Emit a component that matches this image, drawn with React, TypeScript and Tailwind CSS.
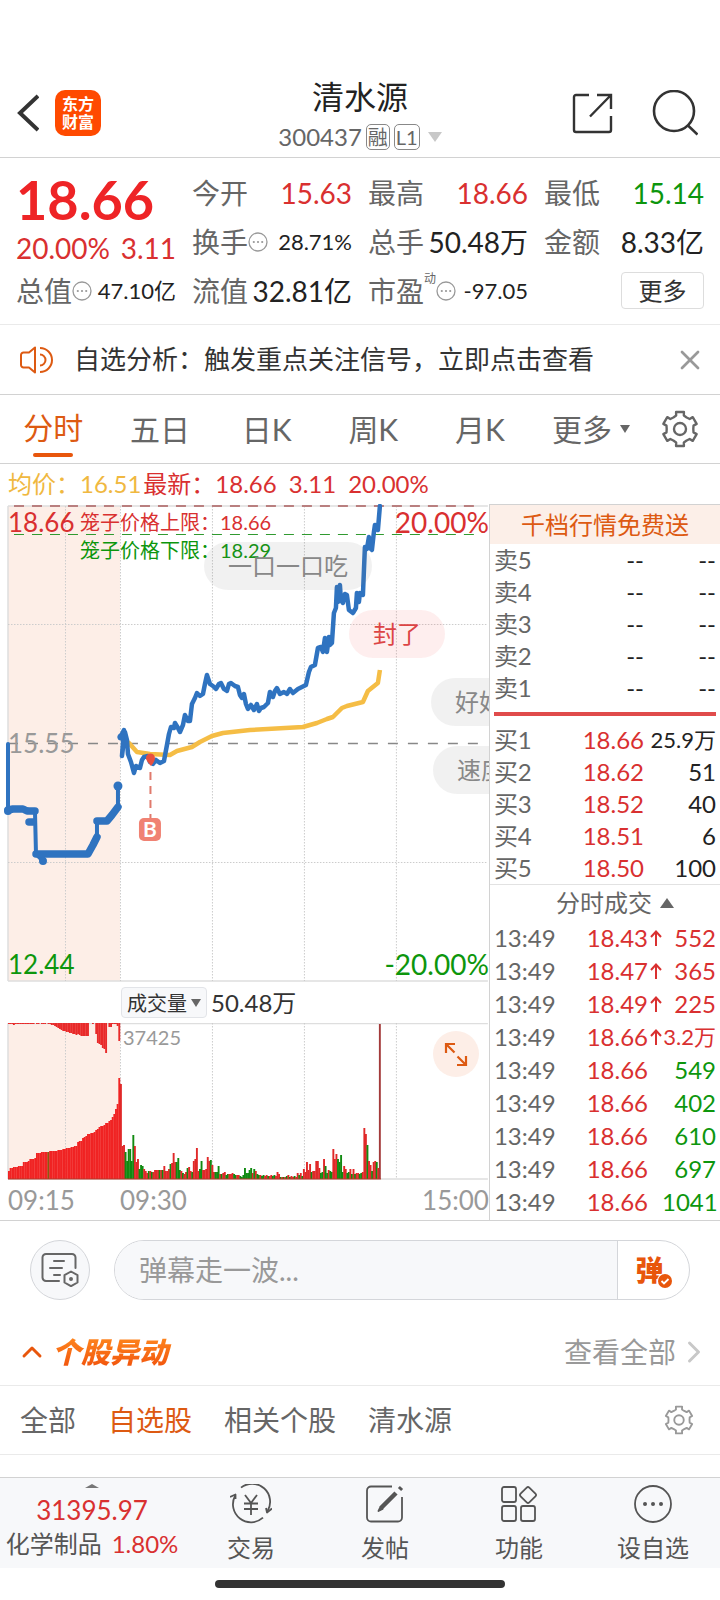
import type { ReactNode } from "react"
import { ChevronRight, ChevronUp, X } from "lucide-react"

const GEAR_POINTS = [0, 60, 120, 180, 240, 300]
  .flatMap((base) =>
    [
      [-30, 8.4],
      [-16, 8.8],
      [-13, 11],
      [13, 11],
      [16, 8.8],
    ].map(([offset, radius]) => {
      const angle = ((base + offset - 90) * Math.PI) / 180
      return `${(12 + radius * Math.cos(angle)).toFixed(2)},${(12 + radius * Math.sin(angle)).toFixed(2)}`
    }),
  )
  .join(" ")

function GearIcon({ className }: { className?: string }) {
  return (
    <svg viewBox="0 0 24 24" className={className} fill="none" stroke="currentColor" strokeWidth="1.5" strokeLinejoin="round" aria-hidden>
      <polygon points={GEAR_POINTS} />
      <circle cx="12" cy="12" r="3.8" />
    </svg>
  )
}

function Caret({ className, up }: { className?: string; up?: boolean }) {
  return (
    <svg viewBox="0 0 12 8" className={className} fill="currentColor" preserveAspectRatio="none" aria-hidden>
      <path d={up ? "M6 0 12 8H0z" : "M0 0h12L6 8z"} />
    </svg>
  )
}

function MoreDots() {
  return (
    <svg viewBox="0 0 20 20" className="size-5 shrink-0 text-[#999]" fill="none" stroke="currentColor" aria-hidden>
      <circle cx="10" cy="10" r="9" strokeWidth="1.3" />
      <path d="M5.8 10h.01M10 10h.01M14.2 10h.01" strokeWidth="2.2" strokeLinecap="round" />
    </svg>
  )
}

function Header() {
  return (
    <header className="grid grid-cols-[1fr_auto_1fr] items-center border-b border-[#d2d2d2] px-4 pt-[73px] pb-1">
      <div className="flex items-center gap-4">
        <button aria-label="返回">
          <svg viewBox="0 0 23 38" className="h-[38px] w-[23px] text-[#333]" fill="none" stroke="currentColor" strokeWidth="4" aria-hidden>
            <path d="M22 2 4 19l18 17" />
          </svg>
        </button>
        <a href="#home" className="flex size-[46px] flex-col items-center justify-center rounded-[10px] bg-[#ff4a00] text-base leading-[18px] font-bold text-white">
          <span>东方</span>
          <span>财富</span>
        </a>
      </div>
      <div className="flex flex-col items-center">
        <h1 className="text-[32px] leading-[48px] text-[#222]">清水源</h1>
        <button className="flex h-8 items-center gap-1 text-2xl text-[#666]">
          300437
          <span className="rounded-[5px] border border-[#888] px-px text-xl leading-6">融</span>
          <span className="rounded-[5px] border border-[#888] px-px text-xl leading-6">L1</span>
          <Caret className="ml-1 h-2.5 w-3.5 text-[#c8c8c8]" />
        </button>
      </div>
      <div className="flex items-center justify-end gap-[38px] pr-1.5 text-[#333]">
        <button aria-label="分享">
          <svg viewBox="0 0 44 44" className="size-11" fill="none" stroke="currentColor" strokeWidth="2.4" aria-hidden>
            <path d="M19 4H6a2 2 0 0 0-2 2v33a2 2 0 0 0 2 2h33a2 2 0 0 0 2-2V25M27 4h14v14M41 4 20 25.500" />
          </svg>
        </button>
        <button aria-label="搜索">
          <svg viewBox="0 0 46 46" className="size-[46px]" fill="none" stroke="currentColor" strokeWidth="2.6" aria-hidden>
            <circle cx="22" cy="21" r="20" />
            <path d="m35.500 35 10 9.500" />
          </svg>
        </button>
      </div>
    </header>
  )
}

type StatProps = { label: ReactNode; value: string; tone?: string; small?: boolean; dots?: boolean }

function Stat({ label, value, tone = "text-[#222]", small, dots }: StatProps) {
  return (
    <div className="flex h-[49px] items-center justify-between whitespace-nowrap">
      <dt className="flex items-center text-[28px] text-[#666]">
        {label}
        {dots && <MoreDots />}
      </dt>
      <dd className={`${small ? "text-[22px]" : "text-[28px]"} ${tone}`}>{value}</dd>
    </div>
  )
}

function Quote() {
  return (
    <dl className="grid grid-cols-4 gap-x-4 border-b border-[#eaeaea] px-4 pt-[10px] pb-[9px]">
      <div className="row-span-2">
        <dt className="sr-only">最新价</dt>
        <dd className="h-[62px] text-[54px] leading-[64px] font-bold text-[#ee2426]">18.66</dd>
        <dd className="flex h-9 items-center justify-between text-[28px] leading-9 text-[#d93030]">
          <span>20.00%</span>
          <span>3.11</span>
        </dd>
      </div>
      <Stat label="今开" value="15.63" tone="text-[#d93030]" />
      <Stat label="最高" value="18.66" tone="text-[#d93030]" />
      <Stat label="最低" value="15.14" tone="text-[#0d960d]" />
      <Stat label="换手" value="28.71%" small dots />
      <Stat label="总手" value="50.48万" />
      <Stat label="金额" value="8.33亿" />
      <Stat label="总值" value="47.10亿" small dots />
      <Stat label="流值" value="32.81亿" />
      <Stat
        label={
          <>
            市盈<sup className="-top-3 text-xs">动</sup>
          </>
        }
        value="-97.05"
        small
        dots
      />
      <div className="flex items-center justify-end">
        <button className="h-[37px] w-[83px] rounded border border-[#ddd] text-2xl leading-none text-[#333]">更多</button>
      </div>
    </dl>
  )
}

function Notice() {
  return (
    <div className="flex h-[70px] items-center border-b border-[#d2d2d2] px-5">
      <svg viewBox="0 0 34 28" className="mr-5 h-7 w-[34px] text-[#dd5a12]" fill="none" stroke="currentColor" strokeWidth="2" strokeLinejoin="round" aria-hidden>
        <path d="M15 1.500v25L9 21.500H3.500a2.500 2.500 0 0 1-2.500-2.500V9a2.500 2.500 0 0 1 2.500-2.500H9z" />
        <path d="M20 8.500a5.500 5.500 0 0 1 0 11M20 2a12 12 0 0 1 0 24" />
      </svg>
      <a href="#signal" className="flex-1 text-[26px] text-[#333]">
        自选分析：触发重点关注信号，立即点击查看
      </a>
      <button aria-label="关闭">
        <X className="-mr-1.5 size-8 text-[#999]" strokeWidth={2} />
      </button>
    </div>
  )
}

function PeriodTabs() {
  return (
    <nav className="grid grid-cols-[repeat(6,minmax(0,1fr))_80px] border-b border-[#d2d2d2] text-3xl text-[#666]">
      <button className="flex h-[68px] flex-col items-center justify-end text-[#dd5a12]">
        <span className="leading-[52px]">分时</span>
        <span className="mb-1.5 h-1 w-10 rounded-full bg-[#e8560c]" />
      </button>
      {["五日", "日K", "周K", "月K"].map((tab) => (
        <button key={tab}>{tab}</button>
      ))}
      <button className="flex items-center justify-end gap-2 pr-2.5">
        更多
        <Caret className="h-2 w-2.5" />
      </button>
      <button aria-label="图表设置" className="flex items-center justify-center">
        <GearIcon className="size-[38px]" />
      </button>
    </nav>
  )
}

const PRICE_LINE =
  "120,233 122,230 124,226 122,252 125,228 127,236 128,250 131,258 134,269 136,262 140,264 142,256 144,253 148,252 150,258 153,260 156,256 160,259 164,257 167,241 169,230 171,223 174,224 175,219 178,224 180,228 183,221 185,211 188,217 190,217 192,200 195,194 197,189 200,192 203,190 205,180 207,171 210,180 213,182 216,185 219,180 221,179 224,185 227,187 229,180 231,179 235,182 238,183 240,191 242,194 244,190 246,200 248,205 251,201 254,206 257,200 259,207 261,204 264,203 268,199 270,188 273,193 275,187 277,184 280,190 284,188 287,190 290,185 293,189 298,185 302,183 306,181 309,168 311,163 315,161 318,144 321,143 323,148 325,134 327,148 329,133 330,141 332,139 334,109 336,104 337,83 338,98 340,81 341,96 343,99 345,90 347,91 349,106 353,109 356,104 357,89 359,98 360,89 363,91 365,43 367,45 369,33 370,44 372,46 374,28 375,21 378,26 380,2"
const AVERAGE_LINE =
  "121,233 129,239 137,248 150,250 170,251 177,247 192,243 200,238 212,232 223,229 250,226 303,223 317,219 327,215 333,213 342,204 347,202 363,198 368,187 378,179 380,166"
const AUCTION_LINE = "8,240 8,307 13,304 23,304 35,308 36,350 43,357 43,350 88,349 93,341 97,333 97,317 107,317 112,311 118,303 118,282"
const GRID_X = [65, 120, 212, 304, 396]

function PriceChart() {
  return (
    <div className="relative h-[478px] overflow-hidden">
      <svg viewBox="0 0 489 478" preserveAspectRatio="none" className="h-full w-full" fill="none" role="img" aria-label="分时走势">
        <rect x="8" y="2" width="112" height="475" fill="#fdeee7" />
        <path d="M8 2h480M8 477h480M8 2v475" stroke="#dedede" strokeWidth="1.500" />
        {GRID_X.map((x) => (
          <path key={x} d={`M${x}.5 2v475`} stroke="#ccc" strokeDasharray="1.500 1.500" />
        ))}
        <path d="M8 120.500h480M8 358.500h480" stroke="#ccc" strokeDasharray="1.500 1.500" />
        <path d="M14 2h466" stroke="#b97f7f" strokeWidth="2" strokeDasharray="10 8" />
        <path d="M14 30.500h466" stroke="#2f9a2f" strokeDasharray="10 8" />
        <path d="M8 239.500h480" stroke="#888" strokeWidth="1.500" strokeDasharray="10 10" />
        <polyline points={AVERAGE_LINE} stroke="#f5bd45" strokeWidth="4.500" strokeLinejoin="round" />
        <g stroke="#2f73c0" strokeLinejoin="round" strokeLinecap="round">
          <polyline points={AUCTION_LINE} strokeWidth="4" />
          <path d="M8 306 13 305H23L27 307H35M29 318H33M36 350H88L93 341L97 333M97 317H107L112 311L118 303" strokeWidth="7.500" />
          <polyline points={PRICE_LINE} strokeWidth="4.500" />
        </g>
        <g fill="#2f73c0">
          <circle cx="8" cy="307" r="4" />
          <circle cx="43" cy="357" r="4" />
          <circle cx="118" cy="282" r="4.500" />
          <circle cx="121" cy="233" r="3.500" />
        </g>
        <path d="M150.500 268v46" stroke="#e07a6c" strokeWidth="2" strokeDasharray="8 6" />
        <path d="M146 254a4.500 4.500 0 0 1 9 0c0 3-1.500 5-4 8-2-3-5-5-5-8z" fill="#e8503f" />
        <rect x="139" y="314" width="22" height="23" rx="5" fill="#f08273" />
        <text x="150" y="333" textAnchor="middle" fontSize="21" fontWeight="700" fill="#fff">
          B
        </text>
      </svg>

      <div className="pointer-events-none absolute inset-0 pl-2 text-[26px] leading-9">
        <span className="absolute top-0 text-[#d93030]">18.66</span>
        <span className="absolute top-[221px] text-[#999]">15.55</span>
        <span className="absolute bottom-0 text-[#0d960d]">12.44</span>
        <span className="absolute top-0 right-0 text-[28px] text-[#d93030]">20.00%</span>
        <span className="absolute right-0 bottom-0 text-[28px] text-[#0d960d]">-20.00%</span>
        <div className="absolute top-1 left-20 text-xl leading-7">
          <p className="text-[#d93030]">笼子价格上限：18.66</p>
          <p className="text-[#0d960d]">笼子价格下限：18.29</p>
        </div>
      </div>

      <div className="pointer-events-none absolute inset-0 text-2xl leading-[48px] whitespace-nowrap text-[#888]">
        <span className="absolute top-[38px] left-[204px] rounded-full bg-[#777]/10 px-6">一口一口吃</span>
        <span className="absolute top-[106px] left-[349px] rounded-full bg-[#ee2426]/8 px-6 text-[#dc4545]">封了</span>
        <span className="absolute top-[174px] left-[431px] rounded-full bg-[#777]/10 px-6">好好好</span>
        <span className="absolute top-[242px] left-[433px] rounded-full bg-[#777]/10 px-6">速度</span>
      </div>
    </div>
  )
}

// order volume accumulated during the opening auction, then the unmatched side drawn from the top
const AUCTION_VOLUME = [
  8, 11, 11, 12, 12, 12, 13, 13, 13, 17, 17, 17, 18, 20, 20, 20, 21, 26, 26, 26, 27, 27, 27, 27, 27, 28, 28, 28, 28, 28, 29,
  29, 29, 30, 30, 31, 31, 31, 32, 32, 33, 33, 37, 38, 38, 41, 42, 43, 45, 45, 46, 46, 47, 49, 50, 52, 53, 53, 54, 56, 56, 58,
  59, 62, 65, 70, 75, 101,
]
const AUCTION_UNMATCHED = [
  1, 1, 1, 2, 1, 1, 1, 1, 1, 1, 1, 1, 1, 1, 1, 1, 0, 1, 1, 0, 1, 1, 1, 0, 1, 1, 2, 2, 3, 4, 5, 6, 7, 8, 8, 9, 9, 10, 10, 11,
  11, 12, 11, 12, 13, 13, 13, 13, 13, 0, 0, 1, 0, 11, 20, 21, 22, 25, 26, 30, 0, 4, 4, 1, 1, 1, 3, 18,
]
// one value a minute, negative where the price fell
const MINUTE_VOLUME = [
  95, 33, 34, -27, -18, -30, -30, -18, -44, 33, 17, 20, -10, -14, -13, 10, 8, 6, -8, 8, -7, 7, 9, 9, 9, -9, 9, -9, 13, 8, 8, 10,
  -15, 16, 26, 17, -17, -21, -9, 8, -6, 5, 7, -11, 12, 8, -7, 18, 20, 31, 8, -10, -18, 9, 9, 10, 22, 18, -19, 14, 7, -7, -7, -13,
  5, -5, 6, 7, -4, -5, 5, 5, 6, -5, -4, 4, 4, -3, -2, -4, -11, -6, -6, -9, -11, 6, -10, 8, -5, -4, 4, -3, -4, 3, 4, -3, 3, 4, -3,
  -4, 3, 7, 5, -2, 2, -2, 2, -3, 4, -2, 3, 2, -3, 2, 6, -4, 6, -3, 10, 7, 17, 9, 15, -7, 8, 8, 18, 18, 11, -6, -7, 20, -13, -6,
  9, -8, -7, 30, 20, 25, -20, -17, -24, -7, 13, 10, -6, -7, 10, -5, 10, -5, 6, 6, -5, -6, 7, 51, 45, -34, 18, 14, -8, 17, 18,
  -17, 11, 155,
]

function VolumeChart() {
  const auctionStep = 112 / AUCTION_VOLUME.length
  const minuteStep = 259 / (MINUTE_VOLUME.length - 1)
  return (
    <div className="relative h-[157px]">
      <svg viewBox="0 0 489 157" preserveAspectRatio="none" className="h-full w-full" fill="none" role="img" aria-label="成交量">
        <rect x="8" width="112" height="156" fill="#fdeee7" />
        <path d="M8 .5h480M8 156h480M8 0v156" stroke="#dedede" strokeWidth="1.500" />
        {GRID_X.map((x) => (
          <path key={x} d={`M${x}.5 0v156`} stroke="#ccc" strokeDasharray="1.500 1.500" />
        ))}
        {AUCTION_VOLUME.map((v, i) => (
          <rect key={i} x={8 + i * auctionStep} y={156 - v} width="1.900" height={v} fill={i === 24 ? "#8a5a10" : "#f02323"} />
        ))}
        {AUCTION_UNMATCHED.map((v, i) => (
          <rect key={i} x={8 + i * auctionStep} y="0" width="1.900" height={v} fill="#e82a2a" />
        ))}
        {MINUTE_VOLUME.map((v, i) => (
          <rect key={i} x={120 + i * minuteStep} y={156 - Math.abs(v)} width="1.900" height={Math.abs(v)} fill={v < 0 ? "#118a11" : v > 150 ? "#a33a3a" : "#e02828"} />
        ))}
        <path d="M8 156h373" stroke="#b23a2a" />
      </svg>
      <span className="absolute top-0 left-[123px] text-xl leading-7 text-[#999]">37425</span>
      <button aria-label="全屏" className="absolute top-2 right-2.5 size-[46px] rounded-full bg-[#fdeee7] text-[#dd5a12]">
        <svg viewBox="0 0 46 46" fill="none" stroke="currentColor" strokeWidth="2.200" aria-hidden>
          <path d="M13 22v-9h9M13 13l8.500 8.500M33 25v9h-9M33 34l-8.500-8.500" />
        </svg>
      </button>
    </div>
  )
}

const ASKS = ["卖5", "卖4", "卖3", "卖2", "卖1"].map((level) => [level, "--", "--"])
const BIDS = [
  ["买1", "18.66", "25.9万"],
  ["买2", "18.62", "51"],
  ["买3", "18.52", "40"],
  ["买4", "18.51", "6"],
  ["买5", "18.50", "100"],
]
const TRADES = [
  { price: "18.43", size: "552", up: true },
  { price: "18.47", size: "365", up: true },
  { price: "18.49", size: "225", up: true },
  { price: "18.66", size: "3.2万", up: true },
  { price: "18.66", size: "549" },
  { price: "18.66", size: "402" },
  { price: "18.66", size: "610" },
  { price: "18.66", size: "697" },
  { price: "18.66", size: "1041" },
]

function BookTable({ rows, tone }: { rows: string[][]; tone: string }) {
  return (
    <table className="w-full table-fixed text-right text-2xl leading-8 text-[#222]">
      <tbody>
        {rows.map(([level, price, size]) => (
          <tr key={level} className="h-8">
            <th scope="row" className="w-14 p-0 text-left font-normal text-[#666]">
              {level}
            </th>
            <td className={`p-0 ${tone}`}>{price}</td>
            <td className={`w-[72px] p-0 ${size.length > 4 ? "text-[22px]" : ""}`}>{size}</td>
          </tr>
        ))}
      </tbody>
    </table>
  )
}

function OrderBook() {
  return (
    <aside className="border-t border-l border-[#d2d2d2]">
      <a href="#depth" className="block h-[39px] bg-[#fcefe8] text-center text-2xl leading-[39px] text-[#dd5a12]">
        千档行情免费送
      </a>
      <div className="px-1">
        <BookTable rows={ASKS} tone="text-[#222]" />
        <div className="my-2 h-1 bg-[#e04b4b]" />
        <BookTable rows={BIDS} tone="text-[#d93030]" />
      </div>
      <button className="flex h-[37px] w-full items-center justify-center gap-2 border-t border-[#e2e2e2] pl-5 text-2xl text-[#666]">
        分时成交
        <Caret up className="h-2.5 w-3.5" />
      </button>
      <table className="w-full table-fixed text-right text-2xl leading-[33px]">
        <tbody>
          {TRADES.map(({ price, size, up }, i) => (
            <tr key={i} className="h-[33px]">
              <td className="w-[68px] p-0 pl-1 text-left text-[#666]">13:49</td>
              <td className="p-0 text-[#d93030]">
                <span className="flex items-center justify-end">
                  {price}
                  <span className="flex w-3.5 justify-end">
                    {up && (
                      <svg viewBox="0 0 12 16" className="h-4 w-3" fill="none" stroke="currentColor" strokeWidth="2" aria-label="上涨">
                        <path d="M6 16V2M1 7l5-5.500L11 7" />
                      </svg>
                    )}
                  </span>
                </span>
              </td>
              <td className={`w-[58px] p-0 pr-1 whitespace-nowrap ${up ? "text-[#d93030]" : "text-[#0d960d]"} ${size.length === 4 && up ? "text-[22px]" : ""}`}>{size}</td>
            </tr>
          ))}
        </tbody>
      </table>
    </aside>
  )
}

function Market() {
  return (
    <section className="border-b border-[#d2d2d2]">
      <div className="flex h-10 items-center gap-0.5 pl-2 text-2xl whitespace-nowrap text-[#d93030]">
        <span className="text-[#f0b840]">均价：16.51</span>
        <span>最新：18.66</span>
        <span className="ml-2.5">3.11</span>
        <span className="ml-2.5">20.00%</span>
      </div>
      <div className="grid grid-cols-[minmax(0,679fr)_minmax(0,321fr)]">
        <div>
          <PriceChart />
          <div className="flex h-[41px] items-center gap-1 pl-[121px] text-2xl text-[#333]">
            <button className="flex h-[31px] items-center gap-1 rounded border border-[#e2e4e8] bg-[#f7f8fa] px-[5px] text-xl">
              成交量
              <Caret className="h-2 w-2.5 text-[#666]" />
            </button>
            50.48万
          </div>
          <VolumeChart />
          <div className="flex h-10 items-center pl-2 text-[26px] text-[#999]">
            <span className="w-28">09:15</span>
            <span>09:30</span>
            <span className="ml-auto">15:00</span>
          </div>
        </div>
        <OrderBook />
      </div>
    </section>
  )
}

function Barrage() {
  return (
    <form className="flex gap-6 px-[30px] py-[19px]">
      <button type="button" aria-label="弹幕设置" className="flex size-[60px] shrink-0 items-center justify-center rounded-full border border-[#d4d6da] bg-[#f7f8fa] text-[#666]">
        <svg viewBox="0 0 38 34" className="h-[34px] w-[38px]" fill="none" stroke="currentColor" strokeWidth="2" strokeLinecap="round" aria-hidden>
          <path d="M18 28H5a3.500 3.500 0 0 1-3.500-3.500v-20A3.500 3.500 0 0 1 5 1h26a3.500 3.500 0 0 1 3.500 3.500V15" />
          <path d="M13 8h10M9 15h12M13 22h6" />
          <path d="m30 18.500 6.500 3.700v7.300L30 33.200l-6.500-3.700v-7.300z" strokeLinejoin="round" />
          <circle cx="30" cy="26" r="1" fill="currentColor" />
        </svg>
      </button>
      <div className="flex h-[60px] min-w-0 flex-1 overflow-hidden rounded-full border border-[#d4d6da]">
        <input aria-label="弹幕" placeholder="弹幕走一波..." className="min-w-0 flex-1 bg-[#f7f8fa] pl-6 text-[28px] outline-none placeholder:text-[#999]" />
        <button type="button" aria-label="弹幕开关" className="relative w-[72px] border-l border-[#d4d6da] pr-2 text-[28px] font-black text-[#e8560c]">
          弹
          <svg viewBox="0 0 16 16" className="absolute right-4 bottom-2.5 size-4" aria-hidden>
            <circle cx="8" cy="8" r="8" fill="#fff" />
            <circle cx="8" cy="8" r="7" fill="#e8560c" />
            <path d="m4.500 8 2.500 2.500L11.500 6" fill="none" stroke="#fff" strokeWidth="1.800" />
          </svg>
        </button>
      </div>
    </form>
  )
}

function Movers() {
  return (
    <section>
      <div className="flex h-[67px] items-center justify-between border-b border-[#eaeaea] pr-2 pl-4">
        <h2 className="flex items-center gap-1">
          <ChevronUp className="size-8 text-[#e8560c]" strokeWidth={2.2} />
          <span className="bg-linear-to-b from-[#ff8a1f] to-[#f04e0a] bg-clip-text pr-1 text-[29px] leading-9 font-black text-transparent italic">个股异动</span>
        </h2>
        <a href="#all" className="flex items-center text-[28px] text-[#999]">
          查看全部
          <ChevronRight className="size-9 text-[#c8c8c8]" strokeWidth={2} />
        </a>
      </div>
      <div className="flex h-[69px] items-center gap-8 border-b border-[#eaeaea] pr-[26px] pl-5 text-[28px] text-[#666]">
        <button>全部</button>
        <button className="text-[#dd5a12]">自选股</button>
        <button>相关个股</button>
        <button>清水源</button>
        <button aria-label="异动设置" className="ml-auto">
          <GearIcon className="size-[30px] text-[#999]" />
        </button>
      </div>
    </section>
  )
}

const ACTIONS: { label: string; icon: ReactNode }[] = [
  {
    label: "交易",
    icon: (
      <>
        <path d="M11 3.600a18 18 0 0 1 26.500 23.500M33 33.700A18 18 0 0 1 5 12" />
        <path d="m0 13 5.500-2.500V15M42 24.500l-5 4-1-4.500" />
        <path d="m15 11 6 8 6-8M14 19.500h14M14 25h14M21 19v12" />
      </>
    ),
  },
  {
    label: "发帖",
    icon: (
      <>
        <path d="M28 2.500H7a4 4 0 0 0-4 4v27a4 4 0 0 0 4 4h27a4 4 0 0 0 4-4V13" />
        <path d="M17 24 32 9M35.500 5.500l2-2" strokeWidth="4.500" />
        <path d="m14.500 27 2-4 2 2z" fill="currentColor" />
      </>
    ),
  },
  {
    label: "功能",
    icon: (
      <>
        <rect x="4" y="3" width="14" height="15" rx="2" />
        <rect x="4" y="22" width="14" height="15" rx="2" />
        <rect x="23" y="22" width="14" height="15" rx="2" />
        <path d="M28.700 3.600q1.300-1.300 2.600 0L37.400 9.700q1.300 1.300 0 2.600l-6.100 6.100q-1.300 1.300-2.600 0l-6.100-6.100q-1.300-1.300 0-2.600z" />
      </>
    ),
  },
  {
    label: "设自选",
    icon: (
      <>
        <circle cx="21" cy="20" r="18" />
        <path d="M13 20h.01M21 20h.01M29 20h.01" strokeWidth="4" strokeLinecap="round" />
      </>
    ),
  },
]

function BottomBar() {
  return (
    <footer>
      <nav className="grid grid-cols-[184px_repeat(4,minmax(0,1fr))] border-t border-[#d2d2d2] bg-[#f7f8fa] text-2xl text-[#555]">
        <a href="#index" className="flex flex-col items-center pt-1.5 whitespace-nowrap">
          <Caret up className="h-1 w-3.5 text-[#777]" />
          <span className="mt-1 text-[26px] leading-9 text-[#d93030]">31395.97</span>
          <span className="flex h-8 items-center gap-2.5">
            化学制品 <span className="text-[#d93030]">1.80%</span>
          </span>
        </a>
        {ACTIONS.map(({ label, icon }) => (
          <button key={label} className="flex flex-col items-center gap-1 pt-1.5">
            <svg viewBox="0 0 42 40" className="h-10 w-[42px]" fill="none" stroke="currentColor" strokeWidth="1.800" strokeLinejoin="round" aria-hidden>
              {icon}
            </svg>
            <span className="leading-10">{label}</span>
          </button>
        ))}
      </nav>
      <div className="flex h-8 items-center justify-center">
        <div className="h-2 w-[290px] rounded-full bg-[#333]" />
      </div>
    </footer>
  )
}

export default function App() {
  return (
    <div className="min-h-screen w-full bg-white font-[Lato,'Noto_Sans_CJK_SC',sans-serif]">
      <Header />
      <Quote />
      <Notice />
      <PeriodTabs />
      <main>
        <Market />
        <Barrage />
        <Movers />
      </main>
      <div className="h-[22px]" />
      <BottomBar />
    </div>
  )
}
